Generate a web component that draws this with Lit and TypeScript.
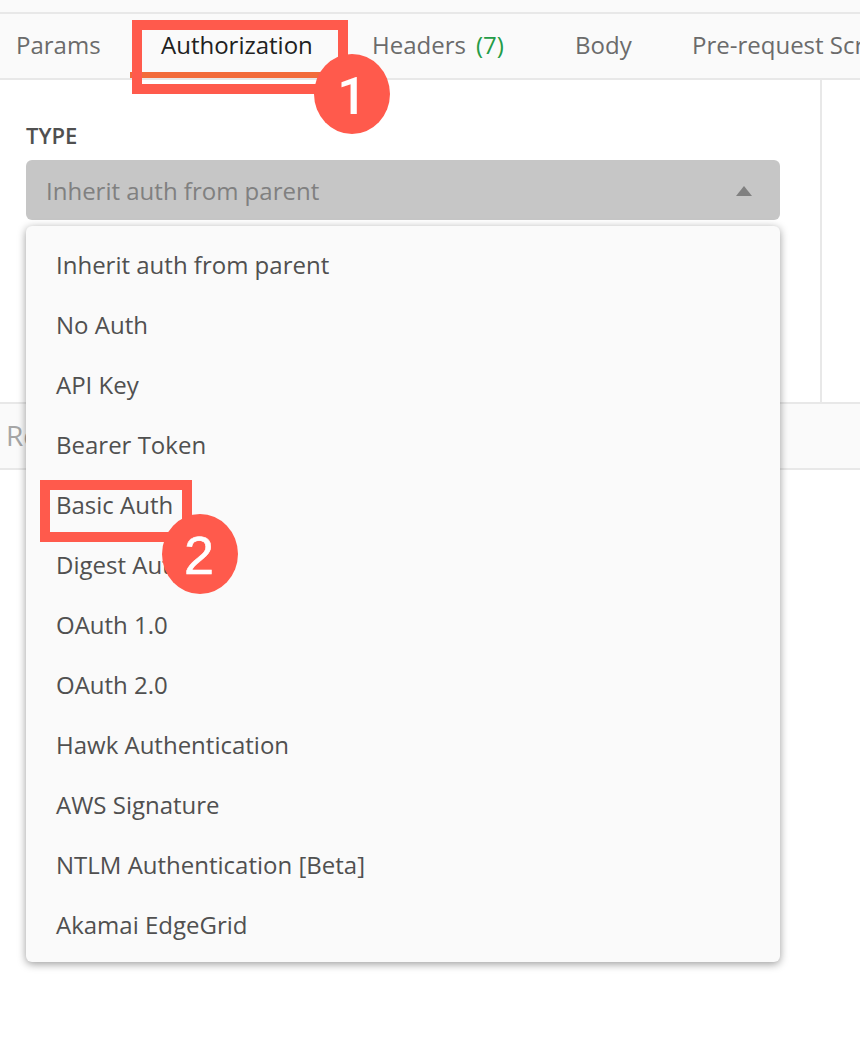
import { LitElement, html, css } from "lit";
import { customElement } from "lit/decorators.js";

const AUTH_TYPES = [
  "Inherit auth from parent",
  "No Auth",
  "API Key",
  "Bearer Token",
  "Basic Auth",
  "Digest Auth",
  "OAuth 1.0",
  "OAuth 2.0",
  "Hawk Authentication",
  "AWS Signature",
  "NTLM Authentication [Beta]",
  "Akamai EdgeGrid",
];

@customElement("app-root")
export class AppRoot extends LitElement {
  static styles = css`
    :host {
      display: block;
      position: relative;
      height: 1064px;
      overflow: hidden;
      background: #fff;
      color: #505050;
      font: 24px/34px "Open Sans", sans-serif;
    }
    * {
      box-sizing: border-box;
    }
    .top {
      height: 14px;
      background: #fafafa;
      border-bottom: 2px solid #e8e8e8;
    }
    .tabs {
      display: flex;
      height: 66px;
      background: #fafafa;
      border-bottom: 2px solid #e8e8e8;
      color: #6b6b6b;
      white-space: nowrap;
    }
    .tab {
      flex: none;
      padding: 14px 30px 0;
      height: 64px;
    }
    .first {
      width: 130px;
      padding-left: 16px;
      padding-right: 0;
    }
    .active {
      width: 212px;
      padding-left: 31px;
      padding-right: 0;
      color: #212121;
      border-bottom: 6px solid #f26b3a;
    }
    .headers {
      width: 203px;
      padding-right: 0;
    }
    .body {
      width: 117px;
      padding-right: 0;
    }
    .count {
      color: #249c47;
      margin-left: 10px;
    }
    .editor {
      height: 322px;
      width: 822px;
      padding: 38px 40px 0 26px;
      border-right: 2px solid #e8e8e8;
    }
    .label {
      font-size: 22px;
      font-weight: 600;
      line-height: 34px;
      height: 42px;
    }
    .select {
      position: relative;
      display: flex;
      align-items: center;
      justify-content: space-between;
      height: 60px;
      padding: 0 28px 0 20px;
      border-radius: 6px;
      background: #c6c6c6;
      color: #808080;
    }
    .value {
      padding-top: 2px;
    }
    .arrow {
      display: block;
      width: 16px;
      height: 10px;
      margin-top: 2px;
      fill: #808080;
    }
    .menu {
      position: absolute;
      z-index: 1;
      top: 66px;
      left: 0;
      width: 754px;
      padding: 8px 0;
      border-radius: 6px;
      background: #fafafa;
      color: #505050;
      box-shadow: 0 2px 8px rgba(0, 0, 0, 0.4);
    }
    .item {
      height: 60px;
      padding: 14px 30px 0;
    }
    .response {
      height: 68px;
      padding: 14px 6px;
      border-top: 2px solid #e8e8e8;
      border-bottom: 2px solid #e8e8e8;
      background: #fafafa;
      color: #a6a6a6;
      font-size: 28px;
    }
    .frame {
      position: absolute;
      z-index: 2;
      border: 10px solid #ff5a4c;
    }
    .frame1 {
      left: 132px;
      top: 20px;
      width: 216px;
      height: 74px;
    }
    .frame2 {
      left: 40px;
      top: 480px;
      width: 152px;
      height: 62px;
    }
    .badge {
      position: absolute;
      z-index: 3;
      width: 76px;
      height: 80px;
      border-radius: 50%;
      background: #ff5a4c;
      color: #fff;
      text-align: center;
    }
    .badge1 {
      left: 314px;
      top: 54px;
      font-family: Roboto, sans-serif;
      font-size: 52px;
      font-weight: 500;
      line-height: 86px;
    }
    .badge2 {
      left: 162px;
      top: 514px;
      padding-right: 2px;
      font-family: "Liberation Sans", sans-serif;
      font-size: 54px;
      line-height: 82px;
      -webkit-text-stroke: 0.6px #fff;
    }
  `;

  render() {
    return html`
      <div class="top"></div>
      <nav class="tabs">
        <div class="tab first">Params</div>
        <div class="tab active">Authorization</div>
        <div class="tab headers">Headers<span class="count">(7)</span></div>
        <div class="tab body">Body</div>
        <div class="tab">Pre-request Script</div>
      </nav>
      <section class="editor">
        <div class="label">TYPE</div>
        <div class="select">
          <span class="value">Inherit auth from parent</span>
          <svg class="arrow" viewBox="0 0 16 10"><path d="M8 0L16 10H0Z" /></svg>
          <div class="menu">
            ${AUTH_TYPES.map((t) => html`<div class="item">${t}</div>`)}
          </div>
        </div>
      </section>
      <div class="response">Response</div>
      <div class="frame frame1"></div>
      <div class="badge badge1">1</div>
      <div class="frame frame2"></div>
      <div class="badge badge2">2</div>
    `;
  }
}
